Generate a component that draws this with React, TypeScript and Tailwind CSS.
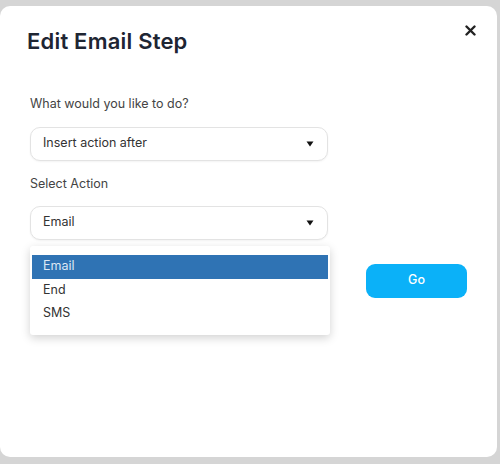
import { useState } from 'react';

const ACTIONS = ['Email', 'End', 'SMS'];

function Caret() {
  return (
    <svg width="8" height="6" viewBox="0 0 8 6" className="shrink-0">
      <path d="M0.5 0.5h7L4 5.5z" fill="#111" />
    </svg>
  );
}

function SelectBox({ value }: { value: string }) {
  return (
    <div className="flex h-[34px] w-[298px] items-center justify-between rounded-[10px] border border-[#e3e3e3] bg-white pl-[12px] pr-[13px] text-[12.5px] text-[#333] shadow-[0_1px_2px_rgba(0,0,0,0.05)]">
      <span>{value}</span>
      <Caret />
    </div>
  );
}

export default function App() {
  const [selected] = useState('Email');

  return (
    <div className="h-[464px] w-[500px] overflow-hidden bg-[#d5d5d5] pt-[6px] font-['Inter',sans-serif]">
      <div className="relative h-[451px] w-[497px] rounded-[10px] bg-white">
        <div className="flex items-start justify-between pl-[27px] pr-[21px] pt-[19px]">
          <h1 className="text-[22px] font-semibold tracking-[0.2px] text-[#1e2533]">Edit Email Step</h1>
          <button className="mt-[0px] text-[#222]">
            <svg width="11" height="11" viewBox="0 0 11 11">
              <path d="M1.5 1.5l8 8M9.5 1.5l-8 8" stroke="currentColor" strokeWidth="2.4" strokeLinecap="round" />
            </svg>
          </button>
        </div>

        <div className="flex flex-col pl-[30px] pt-[37px]">
          <label className="text-[12.5px] text-[#444]">What would you like to do?</label>
          <div className="mt-[13px]">
            <SelectBox value="Insert action after" />
          </div>

          <label className="mt-[14px] text-[12.5px] text-[#444]">Select Action</label>
          <div className="mt-[12px]">
            <SelectBox value={selected} />
          </div>

          <div className="flex items-start">
            <div className="mt-[6px] flex h-[89px] w-[300px] flex-col rounded-[3px] bg-white px-[2px] pt-[9px] text-[12.5px] text-[#333] shadow-[0_3px_10px_rgba(0,0,0,0.18)]">
              {ACTIONS.map((a) => (
                <div
                  key={a}
                  className={
                    a === selected
                      ? 'flex h-[24px] items-center bg-[#2f73b4] pl-[11px] text-[#dde8f5]'
                      : 'flex h-[23px] items-center pl-[11px]'
                  }
                >
                  {a}
                </div>
              ))}
            </div>
            <button className="ml-[36px] mt-[24px] flex h-[34px] w-[101px] items-center justify-center rounded-[9px] bg-[#0bb1f8] text-[12.5px] font-medium text-white">
              Go
            </button>
          </div>
        </div>
      </div>
    </div>
  );
}
